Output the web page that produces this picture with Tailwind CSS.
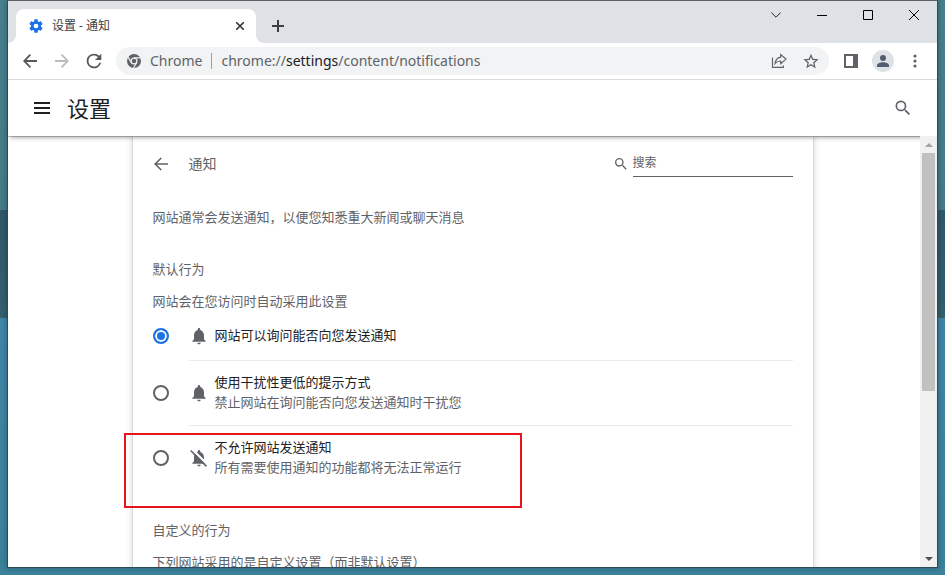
<!DOCTYPE html>
<html lang="zh-CN">
<head>
<meta charset="utf-8">
<meta name="viewport" content="width=device-width, initial-scale=1">
<title>设置 - 通知</title>
<script src="https://cdn.jsdelivr.net/npm/@tailwindcss/browser@4"></script>
</head>
<body class="h-screen overflow-hidden px-[7px] pb-[7px] bg-[linear-gradient(#47808f_0%,#467b89_36.5%,#30596c_36.6%,#34606f_55.2%,#3f87a8_55.4%,#3c829c_100%)] font-['Noto_Sans','Noto_Sans_CJK_SC',sans-serif] text-[13px] leading-5 text-[#5f6368]">
<div class="flex h-full flex-col border border-[#2d4b56] border-t-[#5f6064] bg-white shadow-[0_0_6px_rgba(0,0,0,0.3)]">

  <!-- Tab strip -->
  <div class="flex h-[42px] shrink-0 items-end bg-[#dee1e6]">
    <span class="size-2 bg-white"><span class="block size-2 rounded-br-lg bg-[#dee1e6]"></span></span>
    <div class="flex h-[34px] w-[240px] items-center rounded-t-lg bg-white pl-3 pr-2">
      <svg class="size-4 shrink-0" viewBox="0 0 24 24" fill="#1a73e8"><path d="M19.43 12.98c.04-.32.07-.64.07-.98s-.03-.66-.07-.98l2.11-1.65c.19-.15.24-.42.12-.64l-2-3.46c-.12-.22-.39-.3-.61-.22l-2.49 1c-.52-.4-1.08-.73-1.69-.98l-.38-2.65C14.46 2.18 14.25 2 14 2h-4c-.25 0-.46.18-.49.42l-.38 2.65c-.61.25-1.17.59-1.69.98l-2.49-1c-.23-.09-.49 0-.61.22l-2 3.46c-.13.22-.07.49.12.64l2.11 1.65c-.04.32-.07.65-.07.98s.03.66.07.98l-2.11 1.65c-.19.15-.24.42-.12.64l2 3.46c.12.22.39.3.61.22l2.49-1c.52.4 1.08.73 1.69.98l.38 2.65c.03.24.24.42.49.42h4c.25 0 .46-.18.49-.42l.38-2.65c.61-.25 1.17-.59 1.69-.98l2.49 1c.23.09.49 0 .61-.22l2-3.46c.12-.22.07-.49-.12-.64l-2.11-1.65zM12 15.5a3.5 3.5 0 1 1 0-7 3.5 3.5 0 0 1 0 7z"/></svg>
      <span class="ml-2 flex-1 text-xs text-[#3c4043]">设置 - 通知</span>
      <button aria-label="关闭标签页" class="grid size-4 place-items-center"><svg class="size-2" viewBox="0 0 8 8" stroke="#3c4043" stroke-width="1.6"><path d="M0 0l8 8M8 0L0 8"/></svg></button>
    </div>
    <span class="size-2 bg-white"><span class="block size-2 rounded-bl-lg bg-[#dee1e6]"></span></span>
    <button aria-label="新标签页" class="grid h-[34px] w-7 place-items-center"><svg class="size-3" viewBox="0 0 12 12" stroke="#3c4043" stroke-width="2"><path d="M6 0v12M0 6h12"/></svg></button>
    <div class="ml-auto flex self-start">
      <button aria-label="搜索标签页" class="grid h-7 w-[46px] place-items-center"><svg class="h-[6px] w-[10px]" viewBox="0 0 10 6" fill="none" stroke="#222"><path d="M.3.5L5 5.2 9.7.5"/></svg></button>
      <button aria-label="最小化" class="grid h-7 w-[46px] place-items-center"><svg class="size-[10px]" viewBox="0 0 10 10"><path d="M0 5h10v1H0z"/></svg></button>
      <button aria-label="最大化" class="grid h-7 w-[46px] place-items-center"><svg class="size-[10px]" viewBox="0 0 10 10" fill="none" stroke="#000"><path d="M.5.5h9v9h-9z"/></svg></button>
      <button aria-label="关闭" class="grid h-7 w-[46px] place-items-center"><svg class="size-[10px]" viewBox="0 0 10 10" stroke="#000"><path d="M0 0l10 10M10 0L0 10"/></svg></button>
    </div>
  </div>

  <!-- Toolbar -->
  <div class="flex h-[37px] shrink-0 items-center gap-2 border-b border-[#d9dbdf] px-2">
    <div class="flex gap-1">
      <button aria-label="后退" class="grid size-7 place-items-center"><svg class="size-[14px]" viewBox="0 0 14 14" fill="none" stroke="#55585c" stroke-width="1.8"><path d="M14 7H1.5M7.4 .7L1.2 7l6.2 6.3"/></svg></button>
      <button aria-label="前进" class="grid size-7 place-items-center"><svg class="size-[14px]" viewBox="0 0 14 14" fill="none" stroke="#babcbe" stroke-width="1.8"><path d="M0 7h12.5M6.6 .7L12.8 7l-6.2 6.3"/></svg></button>
      <button aria-label="重新加载" class="grid size-7 place-items-center"><svg class="size-[22px]" viewBox="0 0 24 24" fill="#55585c"><path d="M17.65 6.35A7.96 7.96 0 0 0 12 4a8 8 0 1 0 7.73 10h-2.08A6 6 0 1 1 12 6c1.66 0 3.14.69 4.22 1.78L13 11h7V4z"/></svg></button>
    </div>
    <div class="flex h-7 min-w-0 flex-1 items-center rounded-full bg-[#f1f3f4] pl-[11px] pr-[10px] text-sm">
      <svg class="size-[14px] shrink-0" viewBox="0 0 14 14"><circle cx="7" cy="7" r="7" fill="#5f6368"/><circle cx="7" cy="7" r="2.9" fill="none" stroke="#f1f3f4" stroke-width="1.2"/><path d="M7 3.9h6.6M4.3 8.6L1 2.9M9.7 8.6L6.4 14" stroke="#f1f3f4" stroke-width="1.1"/></svg>
      <span class="mx-[9px] whitespace-nowrap">Chrome</span>
      <span class="h-4 w-px bg-[#9aa0a6]"></span>
      <div role="textbox" aria-label="地址栏" contenteditable="true" spellcheck="false" class="ml-[9px] min-w-0 flex-1 overflow-hidden whitespace-nowrap outline-none">chrome://<span class="text-[#202124]">settings</span>/content/notifications</div>
      <div class="flex gap-4">
        <button aria-label="分享" class="size-4"><svg class="size-4" viewBox="0 0 16 16" fill="none" stroke="#5f6368" stroke-width="1.2"><path d="M1.5 4.5v9.9h10.8v-2M9.7 4.2V1.6L15 6.1l-5.300 4.500V8c-2.500 0-4.200.7-5.600 2.500.4-3.300 2.200-5.700 5.600-6.300z"/></svg></button>
        <button aria-label="为此标签页添加书签" class="size-4"><svg class="size-4" viewBox="1.500 1 21 21" fill="#5f6368"><path d="M22 9.240l-7.190-.62L12 2 9.190 8.630 2 9.240l5.460 4.730L5.820 21 12 17.270 18.180 21l-1.630-7.030L22 9.240zM12 15.400l-3.760 2.270 1-4.280-3.320-2.880 4.380-.38L12 6.100l1.710 4.040 4.380.38-3.320 2.880 1 4.280L12 15.400z"/></svg></button>
      </div>
    </div>
    <div class="flex gap-1">
      <button aria-label="侧边栏" class="grid size-7 place-items-center"><svg class="size-[14px]" viewBox="0 0 14 14" fill="#5f6368" fill-rule="evenodd"><path d="M0 0h14v14H0zM2 2v10h7V2z"/></svg></button>
      <button aria-label="个人资料" class="grid size-7 place-items-center"><svg class="size-[22px]" viewBox="0 0 22 22" fill="#545c70"><circle cx="11" cy="11" r="11" fill="#dee1e6"/><circle cx="11" cy="8" r="3"/><path d="M5 17v-1.500C5 13.200 8.500 12.200 11 12.200s6 1 6 3.300V17z"/></svg></button>
      <button aria-label="更多" class="grid size-7 place-items-center"><svg class="h-[14px] w-1" viewBox="0 0 4 14" fill="#5f6368"><circle cx="2" cy="2" r="1.600"/><circle cx="2" cy="7" r="1.600"/><circle cx="2" cy="12" r="1.600"/></svg></button>
    </div>
  </div>

  <!-- Settings header -->
  <header class="z-10 flex h-14 shrink-0 items-center bg-white pl-[26px] pr-6 shadow-[0_4px_4px_-2px_rgba(0,0,0,0.3),0_1px_0_rgba(0,0,0,0.2)]">
    <button aria-label="主菜单" class="size-4"><svg class="size-4" viewBox="0 0 16 16" fill="#202124"><path d="M0 2h16v2H0zM0 7h16v2H0zM0 12h16v2H0z"/></svg></button>
    <h1 class="ml-[17px] text-[22px] leading-8 text-[#202124]">设置</h1>
    <button aria-label="搜索设置" class="ml-auto size-5"><svg class="size-5" viewBox="0 0 24 24" fill="#5f6368"><path d="M15.500 14h-.79l-.28-.27A6.470 6.470 0 0 0 16 9.500 6.500 6.500 0 1 0 9.500 16c1.610 0 3.090-.59 4.230-1.570l.27.28v.79l5 4.990L20.490 19l-4.990-5zm-6 0a4.500 4.500 0 1 1 0-9 4.500 4.500 0 0 1 0 9z"/></svg></button>
  </header>

  <!-- Page body -->
  <div class="flex min-h-0 flex-1">
    <main class="min-w-0 flex-1 overflow-hidden pl-[17px]">
      <section class="mx-auto min-h-[600px] max-w-[680px] bg-white px-5 shadow-[0_1px_2px_rgba(60,64,67,0.3),0_2px_6px_2px_rgba(60,64,67,0.15)]">
        <div class="flex h-14 items-center">
          <button aria-label="返回" class="size-4"><svg class="size-4" viewBox="0 0 16 16" fill="none" stroke="#5f6368" stroke-width="1.6"><path d="M15 8H2.500M8.200 2L2.200 8l6 6"/></svg></button>
          <h2 class="ml-5 text-sm">通知</h2>
          <label for="q" class="ml-auto mr-1" aria-label="搜索"><svg class="size-4" viewBox="0 0 24 24" fill="#5f6368"><path d="M15.500 14h-.79l-.28-.27A6.470 6.470 0 0 0 16 9.500 6.500 6.500 0 1 0 9.500 16c1.610 0 3.090-.59 4.230-1.570l.27.28v.79l5 4.990L20.490 19l-4.990-5zm-6 0a4.500 4.500 0 1 1 0-9 4.500 4.500 0 0 1 0 9z"/></svg></label>
          <input id="q" type="search" placeholder="搜索" class="h-[26px] w-40 border-b border-[#5f6368] pb-[2px] text-xs outline-none placeholder:text-[#5f6368]">
        </div>
        <p class="py-[15px]">网站通常会发送通知，以便您知悉重大新闻或聊天消息</p>
        <h3 class="mt-[17px]">默认行为</h3>
        <p class="mt-3">网站会在您访问时自动采用此设置</p>

        <div role="radiogroup" aria-label="默认行为">
          <div class="flex h-[49px] items-center">
            <input id="ask" name="mode" type="radio" checked class="size-4 appearance-none rounded-full border-2 border-[#5f6368] checked:border-[#1a73e8] checked:bg-[#1a73e8] checked:shadow-[inset_0_0_0_2px_#fff]">
            <svg class="ml-5 size-5" viewBox="0 0 24 24" fill="#5f6368"><path d="M12 22c1.100 0 2-.9 2-2h-4c0 1.100.89 2 2 2zm6-6v-5c0-3.070-1.640-5.640-4.500-6.320V4a1.500 1.500 0 0 0-3 0v.68C7.630 5.360 6 7.920 6 11v5l-2 2v1h16v-1z"/></svg>
            <label for="ask" class="ml-[6px] pb-[2px] text-[#202124]">网站可以询问能否向您发送通知</label>
          </div>
          <hr class="ml-9 border-[#ebebeb]">
          <div class="flex h-16 items-center">
            <input id="quiet" name="mode" type="radio" class="size-4 appearance-none rounded-full border-2 border-[#5f6368] checked:border-[#1a73e8] checked:bg-[#1a73e8] checked:shadow-[inset_0_0_0_2px_#fff]">
            <svg class="ml-5 size-5" viewBox="0 0 24 24" fill="#5f6368"><path d="M12 22c1.100 0 2-.9 2-2h-4c0 1.100.89 2 2 2zm6-6v-5c0-3.070-1.640-5.640-4.500-6.320V4a1.500 1.500 0 0 0-3 0v.68C7.630 5.360 6 7.920 6 11v5l-2 2v1h16v-1z"/></svg>
            <label for="quiet" class="ml-[6px] pb-[2px]"><span class="block text-[#202124]">使用干扰性更低的提示方式</span><span class="block">禁止网站在询问能否向您发送通知时干扰您</span></label>
          </div>
          <hr class="ml-9 border-[#ebebeb]">
          <div class="relative flex h-16 items-center">
            <input id="block" name="mode" type="radio" class="size-4 appearance-none rounded-full border-2 border-[#5f6368] checked:border-[#1a73e8] checked:bg-[#1a73e8] checked:shadow-[inset_0_0_0_2px_#fff]">
            <svg class="ml-5 size-5" viewBox="0 0 24 24" fill="#5f6368"><path d="M12 22c1.100 0 2-.9 2-2h-4c0 1.100.89 2 2 2zm6-6v-5c0-3.070-1.640-5.640-4.500-6.320V4a1.500 1.500 0 0 0-3 0v.68C7.630 5.360 6 7.920 6 11v5l-2 2v1h16v-1z"/><path d="M3.500 1.200L23 20.700" stroke="#fff" stroke-width="2.600"/><path d="M2 3L21 22" stroke="#5f6368" stroke-width="1.900"/></svg>
            <label for="block" class="ml-[6px] pb-[2px]"><span class="block text-[#202124]">不允许网站发送通知</span><span class="block">所有需要使用通知的功能都将无法正常运行</span></label>
            <span class="pointer-events-none absolute -left-[29px] top-[7px] h-[75px] w-[398px] border-2 border-[#e8141c]"></span>
          </div>
        </div>

        <h3 class="mt-[30px]">自定义的行为</h3>
        <p class="mt-3">下列网站采用的是自定义设置（而非默认设置）</p>
      </section>
    </main>

    <!-- Scrollbar -->
    <div aria-hidden="true" class="z-20 flex w-[17px] shrink-0 flex-col bg-[#f1f1f1]">
      <span class="grid h-[17px] place-items-center"><svg class="h-1 w-2" viewBox="0 0 8 4" fill="#a3a3a3"><path d="M0 4l4-4 4 4z"/></svg></span>
      <span class="min-h-0 flex-1 px-[2px]"><span class="block h-[60%] bg-[#c1c1c1]"></span></span>
      <span class="grid h-[17px] place-items-center"><svg class="h-1 w-2" viewBox="0 0 8 4" fill="#505050"><path d="M0 0l4 4 4-4z"/></svg></span>
    </div>
  </div>
</div>
</body>
</html>
